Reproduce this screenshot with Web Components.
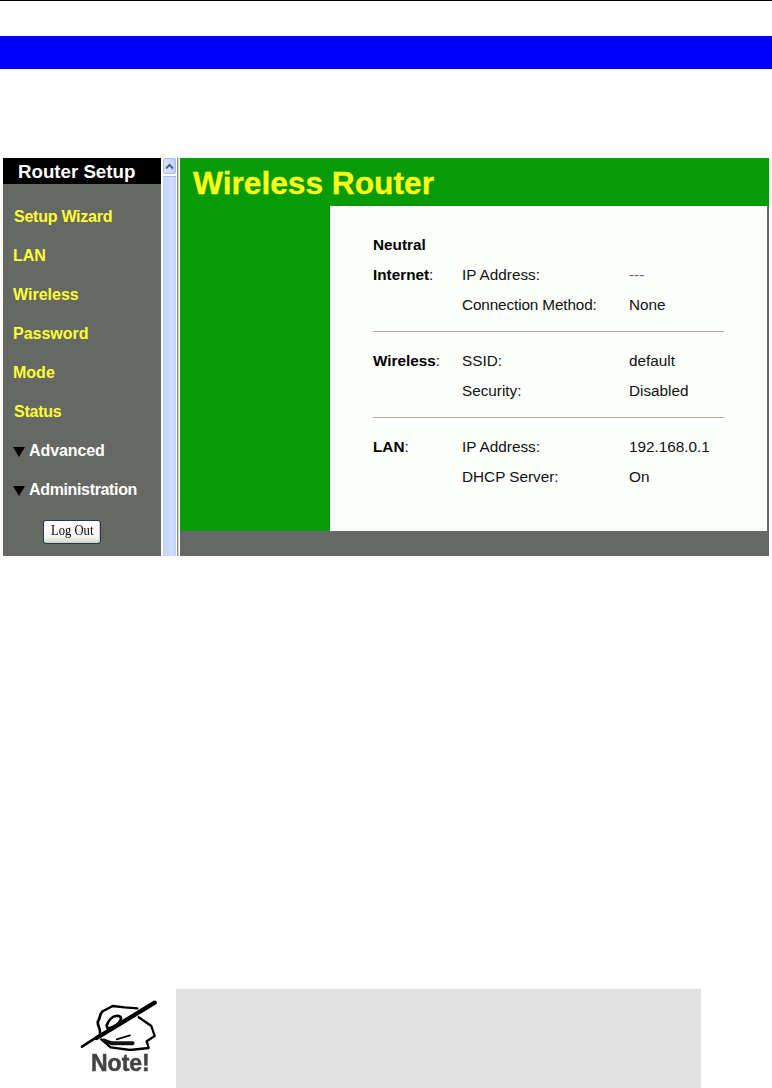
<!DOCTYPE html>
<html><head><meta charset="utf-8"><title>Wireless Router</title>
<style>html,body{margin:0;padding:0;background:#fff}body{width:772px;height:1088px;overflow:hidden;font-family:"Liberation Sans",Arial,sans-serif}</style>
</head><body>
<doc-page></doc-page>
<template id="t-page"><style>
:host{display:flex;flex-direction:column;width:772px;height:1088px}
.rule{height:1px;background:#000}
.band{height:33px;background:#00f;margin-top:35px}
.shot{display:flex;margin:89px 3px 0 3px;height:398px}
.note{display:flex;margin-top:433px;padding-left:80px}
.box{width:525px;height:99px;background:#e2e2e2;margin-left:20px}
</style>
<div class="rule"></div><div class="band"></div>
<div class="shot"><side-menu></side-menu><scroll-bar></scroll-bar><router-main></router-main></div>
<div class="note"><note-icon></note-icon><div class="box"></div></div>
</template>

<template id="t-menu"><style>
:host{display:flex;flex-direction:column;width:158px;background:#666864;height:398px;font:bold 16px "Liberation Sans",Arial,sans-serif;flex:none}
.head{height:26px;background:#000;color:#fff;font-size:18.7px;line-height:27px;padding-left:15px;white-space:nowrap}
.items{display:flex;flex-direction:column;padding-top:13px}
.i{height:39px;line-height:39px;color:#ffff33;white-space:nowrap;padding-left:10px}
.s{padding-left:11px;letter-spacing:-.25px}
.w{color:#fff;display:flex;align-items:center;gap:3px;letter-spacing:-.1px}
.a{letter-spacing:-.35px}
.tri{width:0;height:0;border-left:6.5px solid transparent;border-right:6.5px solid transparent;border-top:10px solid #000;margin-top:3px;margin-right:1px}
.btn{margin:11px 0 0 40px;width:58px;height:24px;box-sizing:border-box;border:1px solid #1c3c5e;border-radius:3px;background:linear-gradient(#fff,#f6f5ef 70%,#dcdacc);box-shadow:inset -1px -1px 0 #cfcdbd;font:15px/18px "Liberation Serif","Times New Roman",serif;color:#000;text-align:center}
.btn span{display:inline-block;transform:scaleX(.84)}
</style>
<div class="head">Router Setup</div>
<div class="items">
<div class="i s">Setup Wizard</div><div class="i">LAN</div><div class="i">Wireless</div><div class="i">Password</div><div class="i">Mode</div><div class="i s">Status</div>
<div class="i w"><span class="tri"></span>Advanced</div><div class="i w a"><span class="tri"></span>Administration</div>
<div class="btn"><span>Log Out</span></div>
</div></template>

<template id="t-scroll"><style>
:host{display:flex;width:19px;flex:none;background:#fff}
.col{display:flex;flex-direction:column;width:13px;margin:0 1px 0 2px}
.up{height:16px;box-sizing:border-box;border:1px solid #a9bde6;border-radius:2px;background:linear-gradient(90deg,#dce6fc,#bcd0f8);display:flex;align-items:center;justify-content:center}
.track{flex:1;margin-top:2px;background:linear-gradient(90deg,#c3d5fb,#cfdefc 70%,#bcd0f8);border-top:1px solid #aebfe6}
.line{width:3px;background:linear-gradient(90deg,#8a8a84 0 1px,#d6d6ce 1px 2px,#fff 2px)}
svg{display:block}
</style><div class="col"><div class="up"><svg width="9" height="7" viewBox="0 0 9 7"><path d="M1 5.5 4.5 2 8 5.5" fill="none" stroke="#4d6185" stroke-width="2"/></svg></div><div class="track"></div></div><div class="line"></div></template>

<template id="t-main"><style>
:host{display:flex;flex-direction:column;flex:1;min-width:0;background:#666864;font-family:"Liberation Sans",Arial,sans-serif}
.title{height:48px;background:#079b07;color:#ffff19;font:bold 31.7px/50px "Liberation Sans",Arial,sans-serif;padding-left:13px;white-space:nowrap;-webkit-text-stroke:.3px #ffff19}
.mid{display:flex;height:325px}
.green{width:150px;background:#079b07;flex:none}
.card{flex:1;background:#fcfffb;margin-right:2px;padding:23px 0 0 43px;font-size:15.3px;color:#111;box-sizing:border-box}
.r{display:grid;grid-template-columns:89px 167px 1fr;height:30px;line-height:31px;white-space:nowrap}
.r b{color:#000}
.n{height:30px;line-height:31px;font-weight:bold;color:#000}
.gap{color:#666}
.c{letter-spacing:-.12px}
hr{border:0;height:1px;background:#aeae9f;width:351px;margin:12px 0 13px}
</style>
<div class="title">Wireless Router</div>
<div class="mid"><div class="green"></div><div class="card">
<div class="n">Neutral</div>
<div class="r"><span><b>Internet</b>:</span><span>IP Address:</span><span class="gap">---</span></div>
<div class="r"><span></span><span class="c">Connection Method:</span><span>None</span></div>
<hr>
<div class="r"><span><b>Wireless</b>:</span><span>SSID:</span><span>default</span></div>
<div class="r"><span></span><span>Security:</span><span>Disabled</span></div>
<hr>
<div class="r"><span><b>LAN</b>:</span><span>IP Address:</span><span>192.168.0.1</span></div>
<div class="r"><span></span><span>DHCP Server:</span><span>On</span></div>
</div></div></template>

<template id="t-note"><style>
:host{display:flex;flex-direction:column;align-items:flex-start;width:76px;flex:none;padding-top:9px;box-sizing:border-box;height:99px}
svg{display:block;filter:blur(.4px)}
span{font:bold 23px/24px "Liberation Sans",Arial,sans-serif;color:#444;margin:0 0 0 11px;filter:blur(.6px);-webkit-text-stroke:.5px #444}
</style>
<svg width="80" height="53" viewBox="0 0 240 159" fill="none" stroke="#000" stroke-linecap="round" stroke-linejoin="round">
<path d="M6 146 62 110" stroke-width="8"/>
<path d="M50 120 224 14" stroke-width="13"/>
<path d="M68 40C58 48 62 58 54 70 50 82 62 88 60 106" stroke-width="8"/>
<path d="M68 40 98 24 134 28 172 31" stroke-width="7"/>
<path d="M80 82C86 66 98 54 108 54 122 52 128 60 118 72 108 84 92 92 82 90Z" stroke-width="8"/>
<path d="M176 58 214 84 224 114 200 130 206 150 150 156 92 148 64 124" stroke-width="7"/>
<path d="M72 128 96 136 162 136" stroke-width="12" stroke-dasharray="18 5" stroke="#111"/>
<path d="M110 124 150 112" stroke-width="5"/>
</svg>
<span>Note!</span></template>

<script>
function def(tag,id){customElements.define(tag,class extends HTMLElement{constructor(){super();this.attachShadow({mode:"open"}).appendChild(document.getElementById(id).content.cloneNode(true));}});}
def("side-menu","t-menu");def("scroll-bar","t-scroll");def("router-main","t-main");def("note-icon","t-note");def("doc-page","t-page");
</script>
</body></html>
